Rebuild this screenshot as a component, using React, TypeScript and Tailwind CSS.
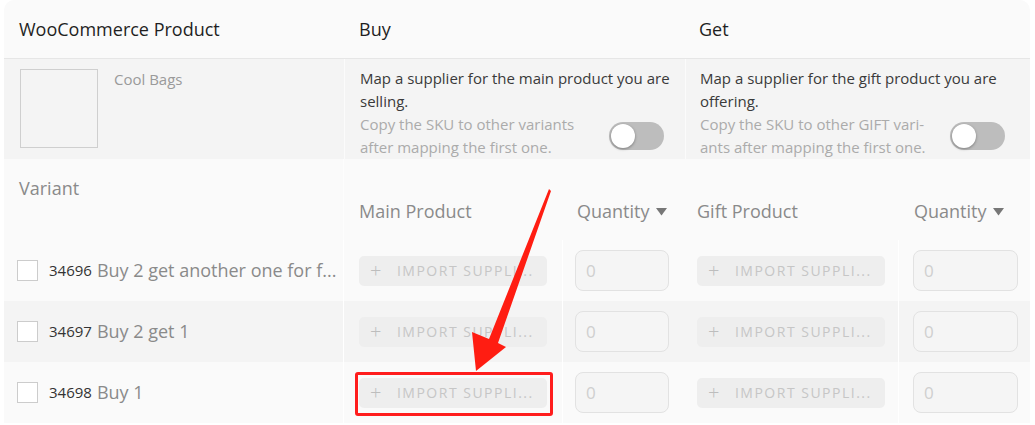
import { ReactNode } from "react";

const cols = "grid grid-cols-[340px_218px_123px_213px_126px]";

const variants = [
  { id: "34696", name: "Buy 2 get another one for f...", bg: "bg-[#fafafa]" },
  { id: "34697", name: "Buy 2 get 1", bg: "bg-[#f4f4f4]" },
  { id: "34698", name: "Buy 1", bg: "bg-[#fafafa]" },
];

const Toggle = () => (
  <div className="relative h-[28px] w-[55px] shrink-0 rounded-full bg-[#bdbdbd]">
    <div className="absolute left-[2px] top-[2px] h-[24px] w-[24px] rounded-full bg-white shadow-[0_1px_3px_rgba(0,0,0,0.35)]" />
  </div>
);

const Caret = () => (
  <svg width="11" height="8" viewBox="0 0 11 8" className="ml-[7px]">
    <path d="M0 0h11L5.5 7.5z" fill="#777" />
  </svg>
);

const ImportButton = () => (
  <div className="flex h-[30px] w-[188px] items-center rounded-[5px] bg-[#eeeeee] pl-[11px] text-[14px] tracking-[1.5px] text-[#c6c6c6]">
    <span className="mr-[14px] text-[20px] font-light leading-none text-[#bdbdbd]">+</span>
    <span className="whitespace-nowrap">IMPORT SUPPLI...</span>
  </div>
);

const QtyInput = ({ w }: { w: string }) => (
  <div
    className={`flex h-[41px] ${w} items-center rounded-[8px] border border-[#e2e2e2] bg-[#f5f5f5] pl-[10px] text-[17px] text-[#cfcfcf]`}
  >
    0
  </div>
);

const InfoCell = ({
  children,
  copy,
  className,
  toggleGap,
}: {
  children: ReactNode;
  copy: ReactNode;
  className?: string;
  toggleGap: string;
}) => (
  <div className={`col-span-2 border-l border-[#fbfbfb] pt-[8px] text-[15px] leading-[23px] ${className ?? ""}`}>
    <p className="pr-[10px] text-[#3a3a3a]">{children}</p>
    <div className={`flex items-center justify-between ${toggleGap}`}>
      <p className="whitespace-nowrap text-[#ababab]">{copy}</p>
      <Toggle />
    </div>
  </div>
);

export default function App() {
  return (
    <div className="relative h-[425px] w-[1035px] overflow-hidden bg-white font-['Open_Sans',sans-serif]">
      <div className="ml-[4px] w-[1026px] rounded-t-[10px] bg-[#fafafa]">
        {/* header */}
        <div className={`${cols} h-[59px] items-center border-b border-[#e6e6e6] text-[18px] font-medium text-[#1f1f1f]`}>
          <div className="pl-[15px]">WooCommerce Product</div>
          <div className="col-span-2 pl-[15px]">Buy</div>
          <div className="col-span-2 pl-[14px]">Get</div>
        </div>

        {/* product info */}
        <div className={`${cols} h-[100px] bg-[#f4f4f4]`}>
          <div className="flex pl-[16px] pt-[10px]">
            <div className="h-[79px] w-[78px] border border-[#cfcfcf]" />
            <span className="ml-[16px] text-[15px] leading-[20px] text-[#9a9a9a]">Cool Bags</span>
          </div>
          <InfoCell
            className="pl-[15px]"
            toggleGap="pr-[21px]"
            copy={
              <>
                Copy the SKU to other variants
                <br />
                after mapping the first one.
              </>
            }
          >
            Map a supplier for the main product you are selling.
          </InfoCell>
          <InfoCell
            className="pl-[14px]"
            toggleGap="pr-[19px]"
            copy={
              <>
                Copy the SKU to other GIFT vari-
                <br />
                ants after mapping the first one.
              </>
            }
          >
            Map a supplier for the gift product you are offering.
          </InfoCell>
        </div>

        {/* variant heading */}
        <div className={`${cols} h-[81px] text-[18px] text-[#8a8a8a]`}>
          <div className="border-r border-[#fdfdfd] pl-[15px] pt-[16px]">Variant</div>
          <div className="pl-[15px] pt-[39px]">Main Product</div>
          <div className="flex items-start pl-[15px] pt-[39px]">
            Quantity
            <span className="mt-[10px]">
              <Caret />
            </span>
          </div>
          <div className="pl-[12px] pt-[39px]">Gift Product</div>
          <div className="flex items-start pl-[16px] pt-[39px]">
            Quantity
            <span className="mt-[10px]">
              <Caret />
            </span>
          </div>
        </div>

        {/* variant rows */}
        {variants.map((v) => (
          <div key={v.id} className={`${cols} h-[61px] items-center ${v.bg}`}>
            <div className="flex h-full items-center border-r border-[#ffffff] pl-[13px]">
              <div className="h-[21px] w-[21px] shrink-0 border border-[#cccccc] bg-white" />
              <span className="ml-[11px] text-[15px] text-[#333]">{v.id}</span>
              <span className="ml-[5px] whitespace-nowrap text-[18px] text-[#8a8a8a]">{v.name}</span>
            </div>
            <div className="pl-[15px]">
              <ImportButton />
            </div>
            <div className="flex h-full items-center border-l border-white pl-[12px]">
              <QtyInput w="w-[94px]" />
            </div>
            <div className="pl-[12px]">
              <ImportButton />
            </div>
            <div className="flex h-full items-center border-l border-white pl-[14px]">
              <QtyInput w="w-[105px]" />
            </div>
          </div>
        ))}
      </div>

      {/* annotation */}
      <div className="absolute left-[355px] top-[372px] h-[44px] w-[198px] rounded-[3px] border-[3px] border-[#ff1d1d]" />
      <svg className="absolute left-0 top-0" width="1035" height="425" viewBox="0 0 1035 425">
        <polygon
          points="549,189 551,191 498,343 506,347 476,371 472,332 489,339"
          fill="#ff1d12"
        />
      </svg>
    </div>
  );
}
